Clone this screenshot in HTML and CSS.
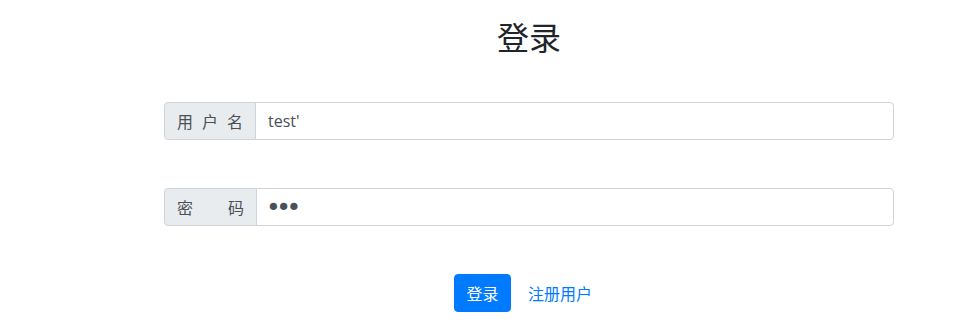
FILE: index.html
```html
<!DOCTYPE html>
<html lang="zh-CN">
<head>
<meta charset="utf-8">
<title>登录</title>
<link rel="stylesheet" href="styles.css">
</head>
<body>
<main class="login">
  <h2 class="login-title">登录</h2>
  <form class="login-form" onsubmit="return false;">
    <div class="input-group">
      <label class="input-label" for="username"><span>用</span><span>户</span><span>名</span></label>
      <input class="input-field" id="username" type="text" value="test'">
    </div>
    <div class="input-group">
      <label class="input-label wide" for="password"><span>密</span><span>码</span></label>
      <input class="input-field password" id="password" type="password" value="abc">
    </div>
    <div class="actions">
      <button class="btn-primary" type="submit">登录</button>
      <a class="btn-link" href="#">注册用户</a>
    </div>
  </form>
</main>
</body>
</html>
```
FILE: styles.css
```css
* { box-sizing: border-box; }
html, body { margin: 0; padding: 0; background: #fff; }
body {
  font-family: "Open Sans", "Noto Sans CJK SC", sans-serif;
  font-size: 16px;
  line-height: 1.5;
  color: #212529;
}
.login {
  margin-left: 164px;
  width: 730px;
  padding-top: 17px;
}
.login-title {
  margin: 0 0 47px;
  text-align: center;
  font-size: 32px;
  font-weight: 400;
  line-height: 1.2;
  font-family: "Noto Sans CJK SC", sans-serif;
  color: #212529;
}
.login-form {
  display: flex;
  flex-direction: column;
  gap: 48px;
}
.input-group {
  display: flex;
  height: 38px;
}
.input-label {
  display: flex;
  justify-content: space-between;
  align-items: center;
  width: 92px;
  padding: 0 12px;
  background: #e9ecef;
  border: 1px solid #ced4da;
  border-radius: 4px 0 0 4px;
  color: #495057;
  font-family: "Noto Sans CJK SC", sans-serif;
  font-size: 16px;
}
.input-label.wide { width: 93px; }
.input-field {
  flex: 1;
  min-width: 0;
  height: 38px;
  margin: 0 0 0 -1px;
  padding: 0 12px;
  border: 1px solid #ced4da;
  border-radius: 0 4px 4px 0;
  font-family: "Open Sans", sans-serif;
  font-size: 16px;
  color: #495057;
  background: #fff;
  outline: none;
}
.input-field.password {
  padding-left: 9px;
  font-family: "DejaVu Sans", sans-serif;
  font-size: 25px;
  letter-spacing: -4.5px;
}
.actions {
  display: flex;
  justify-content: center;
  align-items: center;
  gap: 5px;
}
.btn-primary {
  height: 38px;
  padding: 0 11.5px;
  border: 1px solid #007bff;
  border-radius: 4px;
  background: #007bff;
  color: #fff;
  font-family: "Noto Sans CJK SC", sans-serif;
  font-size: 16px;
  cursor: pointer;
}
.btn-link {
  padding: 6px 12px;
  color: #007bff;
  text-decoration: none;
  font-family: "Noto Sans CJK SC", sans-serif;
  font-size: 16px;
}
```
